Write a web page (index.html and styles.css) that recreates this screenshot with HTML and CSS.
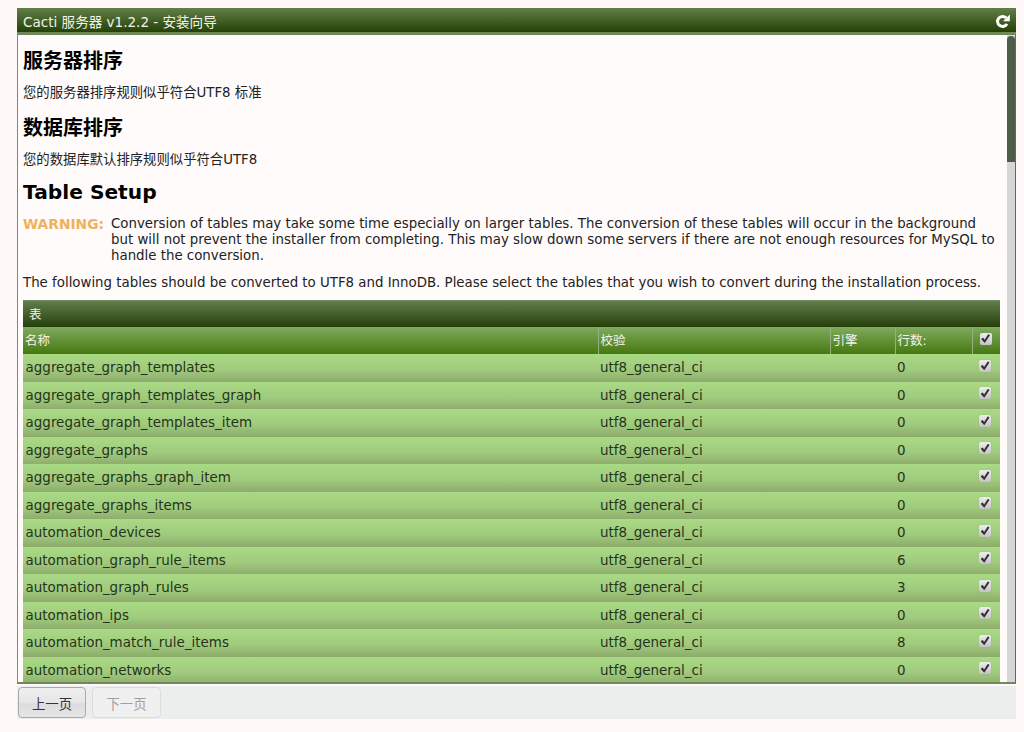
FILE: index.html
```html
<!DOCTYPE html>
<html lang="zh">
<head>
<meta charset="utf-8">
<title>Cacti 服务器 v1.2.2 - 安装向导</title>
<link rel="stylesheet" href="styles.css">
</head>
<body>
<div class="window">
  <header class="titlebar">
    <span class="title">Cacti 服务器 v1.2.2 - 安装向导</span>
    <svg class="refresh" viewBox="0 0 14 14" width="15" height="15" aria-hidden="true"><path d="M11.2 9.2A4.7 4.7 0 1 1 10.4 3.6" fill="none" stroke="#fff" stroke-width="2.8"/><path d="M13.8 .4V6.8H7.4Z" fill="#fff"/></svg>
  </header>
  <div class="panel">
    <main class="content">
      <h2>服务器排序</h2>
      <p>您的服务器排序规则似乎符合UTF8 标准</p>
      <h2>数据库排序</h2>
      <p>您的数据库默认排序规则似乎符合UTF8</p>
      <h2 class="latin">Table Setup</h2>
      <div class="warning"><span class="warn-label">WARNING:</span><span class="warn-text">Conversion of tables may take some time especially on larger tables. The conversion of these tables will occur in the background but will not prevent the installer from completing. This may slow down some servers if there are not enough resources for MySQL to handle the conversion.</span></div>
      <p class="lead">The following tables should be converted to UTF8 and InnoDB. Please select the tables that you wish to convert during the installation process.</p>
      <div class="table-title">表</div>
      <table class="tables">
        <colgroup><col class="c-name"><col class="c-coll"><col class="c-eng"><col class="c-rows"><col class="c-chk"></colgroup>
        <thead><tr><th>名称</th><th>校验</th><th>引擎</th><th>行数:</th><th class="chk"><input type="checkbox" checked></th></tr></thead>
        <tbody>
          <tr><td>aggregate_graph_templates</td><td>utf8_general_ci</td><td></td><td>0</td><td class="chk"><input type="checkbox" checked></td></tr>
          <tr><td>aggregate_graph_templates_graph</td><td>utf8_general_ci</td><td></td><td>0</td><td class="chk"><input type="checkbox" checked></td></tr>
          <tr><td>aggregate_graph_templates_item</td><td>utf8_general_ci</td><td></td><td>0</td><td class="chk"><input type="checkbox" checked></td></tr>
          <tr><td>aggregate_graphs</td><td>utf8_general_ci</td><td></td><td>0</td><td class="chk"><input type="checkbox" checked></td></tr>
          <tr><td>aggregate_graphs_graph_item</td><td>utf8_general_ci</td><td></td><td>0</td><td class="chk"><input type="checkbox" checked></td></tr>
          <tr><td>aggregate_graphs_items</td><td>utf8_general_ci</td><td></td><td>0</td><td class="chk"><input type="checkbox" checked></td></tr>
          <tr><td>automation_devices</td><td>utf8_general_ci</td><td></td><td>0</td><td class="chk"><input type="checkbox" checked></td></tr>
          <tr><td>automation_graph_rule_items</td><td>utf8_general_ci</td><td></td><td>6</td><td class="chk"><input type="checkbox" checked></td></tr>
          <tr><td>automation_graph_rules</td><td>utf8_general_ci</td><td></td><td>3</td><td class="chk"><input type="checkbox" checked></td></tr>
          <tr><td>automation_ips</td><td>utf8_general_ci</td><td></td><td>0</td><td class="chk"><input type="checkbox" checked></td></tr>
          <tr><td>automation_match_rule_items</td><td>utf8_general_ci</td><td></td><td>8</td><td class="chk"><input type="checkbox" checked></td></tr>
          <tr><td>automation_networks</td><td>utf8_general_ci</td><td></td><td>0</td><td class="chk"><input type="checkbox" checked></td></tr>
        </tbody>
      </table>
    </main>
    <div class="scrollbar"><div class="thumb"></div></div>
  </div>
  <footer class="footer">
    <button class="btn" type="button">上一页</button>
    <button class="btn disabled" type="button" disabled>下一页</button>
  </footer>
</div>
</body>
</html>
```
FILE: styles.css
```css
* { box-sizing: border-box; }
html, body { height: 100%; }
body {
  margin: 0;
  background: #fef9f8;
  color: #222;
  font-family: "DejaVu Sans", "Noto Sans CJK SC", sans-serif;
  font-size: 13.35px;
  overflow: hidden;
}
.window {
  display: flex;
  flex-direction: column;
  width: 999px;
  margin-left: 17px;
  padding-top: 8px;
}
.titlebar {
  height: 27px;
  flex: none;
  display: flex;
  align-items: center;
  justify-content: space-between;
  padding: 0 6px 1px 6px;
  color: #f2f2ea;
  font-size: 13.55px;
  background: linear-gradient(#627f4b, #254206 88%, #6f8a58 88%, #6f8a58);
}
.refresh { display: block; }
.panel {
  height: 649px;
  flex: none;
  display: flex;
  border-left: 1px solid #7c8e66;
  border-right: 1px solid #5c6e48;
  border-bottom: 2px solid #73875c;
  background: #fff;
  overflow: hidden;
}
.content {
  flex: 1;
  min-width: 0;
  padding: 0 7px 0 5px;
  background: #fffbfa;
  overflow: hidden;
}
.scrollbar {
  flex: none;
  width: 8px;
  background: #d6d6d6;
}
.thumb {
  height: 126px;
  margin-top: 1px;
  background: #4e5d49;
  border-radius: 4px 4px 0 0;
}
h2 {
  margin: 0;
  font-size: 20px;
  line-height: 24px;
  font-weight: bold;
  color: #000;
}
h2:first-child { margin-top: 14px; }
p { margin: 0; line-height: 16px; }
main > p { margin-top: 12px; margin-bottom: 15px; }
h2.latin { margin-top: -3px; font-size: 20.2px; }
.warning {
  display: flex;
  margin-top: 12px;
  line-height: 16.2px;
}
.warn-label {
  flex: none;
  width: 88px;
  font-weight: bold;
  font-size: 13.8px;
  color: #f0b05c;
}
.warn-text { flex: 1; }
main > p.lead {
  margin-top: 10.5px;
  margin-bottom: 9px;
  white-space: nowrap;
}
.table-title {
  height: 27px;
  line-height: 30px;
  padding-left: 6px;
  color: #f2f2ea;
  font-size: 12.5px;
  background: linear-gradient(#7d9270, #5f7c48 6%, #253f0a);
}
.tables {
  width: 977px;
  border-collapse: collapse;
  table-layout: fixed;
}
.c-name { width: 575px; }
.c-coll { width: 232px; }
.c-eng { width: 65px; }
.c-rows { width: 77px; }
.c-chk { width: 28px; }
.tables thead tr {
  height: 27px;
  background: linear-gradient(#80ab5f, #46780f);
}
.tables th {
  padding: 0 2px 2px;
  text-align: left;
  font-weight: normal;
  font-size: 12.5px;
  color: #f2f2ea;
  border-left: 1px solid #96b17e;
}
.tables th:first-child { border-left: 0; }
.tables tbody tr {
  height: 27.5px;
  background: linear-gradient(#a9da85, #a0cb7d 55%, #8dab6b);
}
.tables td {
  padding: 0 2px;
  font-size: 13.45px;
  color: #26331c;
}
.tables td:first-child { padding-left: 2.6px; }
.tables .chk { padding: 0 0 4px 7px; }
.tables th.chk { padding-left: 7px; }
input[type="checkbox"] {
  appearance: none;
  display: block;
  position: relative;
  width: 12px;
  height: 12px;
  margin: 0;
  border-radius: 2px;
  background: linear-gradient(#eeeeee, #c4c4c4);
  box-shadow: 0 0 1px #8a8a8a;
}
input[type="checkbox"]::after {
  content: "";
  position: absolute;
  inset: 1.5px;
  background: #333;
  clip-path: polygon(0 55%, 25% 40%, 40% 62%, 82% 0, 100% 12%, 42% 100%);
}
.footer {
  height: 33px;
  flex: none;
  margin-top: 2px;
  padding-left: 1px;
  display: flex;
  align-items: center;
  gap: 6px;
  background: #eceeee;
}
.btn {
  width: 68px;
  height: 31px;
  padding: 0;
  border: 1px solid #a9a9a9;
  border-radius: 4px;
  color: #333;
  font: 13.4px "DejaVu Sans", "Noto Sans CJK SC", sans-serif;
  background: linear-gradient(#efefef, #e6e6e6 50%, #dcdcdc 55%, #e6e6e6);
}
.btn.disabled {
  width: 69px;
  border-color: #dcdcdc;
  color: #a0a0a0;
  background: #f0f0f0;
}
```
